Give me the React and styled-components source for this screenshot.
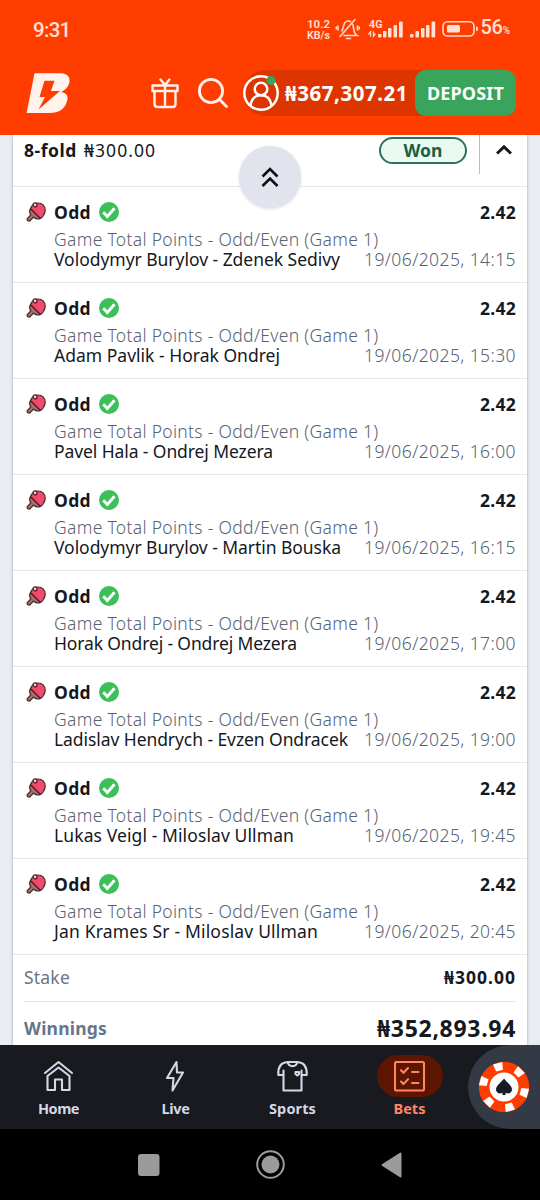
import React from 'react';
import styled, { createGlobalStyle } from 'styled-components';

const bets = [
  { match: 'Volodymyr Burylov - Zdenek Sedivy', date: '19/06/2025, 14:15', w: 286 },
  { match: 'Adam Pavlik - Horak Ondrej', date: '19/06/2025, 15:30', w: 226 },
  { match: 'Pavel Hala - Ondrej Mezera', date: '19/06/2025, 16:00', w: 219 },
  { match: 'Volodymyr Burylov - Martin Bouska', date: '19/06/2025, 16:15', w: 287 },
  { match: 'Horak Ondrej - Ondrej Mezera', date: '19/06/2025, 17:00', w: 243 },
  { match: 'Ladislav Hendrych - Evzen Ondracek', date: '19/06/2025, 19:00', w: 294 },
  { match: 'Lukas Veigl - Miloslav Ullman', date: '19/06/2025, 19:45', w: 240 },
  { match: 'Jan Krames Sr - Miloslav Ullman', date: '19/06/2025, 20:45', w: 264 },
];

// spreads the letters so that a text takes exactly w pixels
function Fit({ w, children }) {
  const ref = React.useRef(null);
  React.useLayoutEffect(() => {
    const el = ref.current;
    el.style.letterSpacing = '0px';
    const gap = (w - el.getBoundingClientRect().width) / children.length;
    el.style.letterSpacing = `${gap.toFixed(3)}px`;
  }, [w, children]);
  return <FitText ref={ref}>{children}</FitText>;
}

function Logo() {
  return (
    <svg width="44" height="40" viewBox="26 73 44 40">
      <path fill="#fff3ec" fillRule="evenodd" d="M34.500 73.300H60c7 0 10.500 3.500 9.400 9-.8 4.200-4 8-8.400 9.700 4.600.6 7.200 3.300 6.400 7.500C65.800 108 60 113 50 113H26.600zM44.500 80.700l-5 16.300h5.500l-6.500 12.500L60 91h-9l3.500-10.300z" />
    </svg>
  );
}

function Gift() {
  return (
    <svg width="28" height="32" viewBox="0 0 28 32" fill="none" stroke="#fff3ec" strokeWidth="2.400" strokeLinejoin="round" strokeLinecap="round">
      <path d="M1.500 8.500h25v5.500h-25zM3.500 14v13c0 2 1 3 3 3h15c2 0 3-1 3-3V14M14 8.500V30M9.500 2.500l4.500 5.500 4.500-5.500" />
    </svg>
  );
}

function Search() {
  return (
    <svg width="30" height="30" viewBox="0 0 30 30" fill="none" stroke="#fff3ec" strokeWidth="2.800" strokeLinecap="round">
      <circle cx="13" cy="13" r="11.600" />
      <path d="M21.500 21.500l7 7" />
    </svg>
  );
}

function User() {
  return (
    <svg width="36" height="36" viewBox="0 0 36 36" fill="none" stroke="#fff" strokeWidth="2.500">
      <circle cx="18" cy="18" r="16.700" />
      <circle cx="18" cy="14" r="6.300" />
      <path d="M7.500 30.500c1-6.500 5-10.200 10.500-10.200s9.500 3.700 10.500 10.200" />
      <circle cx="28" cy="5.500" r="4.500" fill="#39a45c" stroke="none" />
    </svg>
  );
}

function StatusIcons() {
  return (
    <svg width="176" height="26" viewBox="304 16 176 26" fill="none" stroke="#ffd9ca" strokeWidth="1.600" strokeLinecap="round">
      <path d="M343 35.500h13c-3-2-3.200-5-3.500-8-.2-1.500-.5-2.500-1-3.500M341 31c1-2 1.200-4 1.500-5 .8-3.500 2.500-5 5-5l2 .5M345.500 38.500h4M339 36.500l15-17M337 26v4M335.300 27v2M356.500 26v4M358.300 27v2" />
      <g fill="#ffe1d5" stroke="none">
        <rect x="377" y="34" width="3.500" height="3.500" rx="1" />
        <rect x="382" y="31" width="3.500" height="6.500" rx="1" />
        <rect x="387" y="28" width="3.500" height="9.500" rx="1" />
        <rect x="392.500" y="25" width="3.500" height="12.500" rx="1" />
        <rect x="398" y="21.500" width="3.700" height="16" rx="1" />
        <rect x="409" y="34" width="3.500" height="3.500" rx="1" />
        <rect x="414.500" y="31" width="3.500" height="6.500" rx="1" />
        <rect x="420" y="28" width="3.500" height="9.500" rx="1" />
        <rect x="425" y="25" width="3.500" height="12.500" rx="1" />
        <rect x="430.500" y="21.500" width="3.700" height="16" rx="1" />
        <rect x="446" y="25" width="13" height="7.500" rx="1.500" />
        <rect x="475" y="26.500" width="1.800" height="4.500" rx=".8" />
      </g>
      <path strokeWidth="1.400" d="M369.500 36v-4l-1.700 2M372.500 32v4l1.700-2" />
      <rect x="442" y="21.700" width="31" height="14.300" rx="4.500" />
      <g fill="#ffe1d5" stroke="none" fontFamily="Roboto, sans-serif" fontWeight="600" fontSize="10.500">
        <text x="306" y="28" textLength="23" lengthAdjust="spacingAndGlyphs">10.2</text>
        <text x="306" y="39" textLength="23" lengthAdjust="spacingAndGlyphs">KB/s</text>
        <text x="368" y="27.500" textLength="13.500" lengthAdjust="spacingAndGlyphs">4G</text>
      </g>
    </svg>
  );
}

function Paddle() {
  return (
    <svg width="20" height="20" viewBox="0 0 20 20" stroke="#3f2830" strokeWidth="1.200" strokeLinejoin="round">
      <path fill="#b06a62" d="M4.500 6.500l10 10c-2.500 1-5 .3-7-1.300l-3.500 3.600c-1.500 1.200-3.700-.8-2.500-2.500l3.300-3.500c-1.300-2-1.600-4.500-.3-6.300z" />
      <path fill="#f4486c" d="M4.500 6.500C6 2.800 8.500 1 12 1c4.300 0 7.400 3.200 7.200 7-.2 3.500-1.700 6.500-4.700 8.500z" />
      <circle cx="9" cy="2.900" r="2" fill="#f0c4cb" />
    </svg>
  );
}

function Check() {
  return (
    <svg width="20" height="20" viewBox="0 0 20 20">
      <circle cx="10" cy="10" r="10" fill="#3dbf57" />
      <path d="M4.300 10.300l4 4.200 7.200-8.300" fill="none" stroke="#fff" strokeWidth="2.900" />
    </svg>
  );
}

const navIcons = {
  home: (
    <>
      <path d="M1 12.500L14.500 1.500 28 12.500" />
      <path d="M3.500 15.500v14h7.500V19h7v10.500h7.500v-14L14.500 7z" />
    </>
  ),
  live: <path d="M15.500 1.500L6 17.500h6.500L11.500 30 22 12h-6z" />,
  sports: (
    <>
      <path d="M5.500 14.500H.3c-.5-8 2.200-12.500 9.200-13 1.500 5.500 8.500 5.500 10 0 7 .5 9.700 5 9.200 13h-5.200M5.500 10v20h18V10M9.500 1.500h10" />
      <path d="M17.500 11.500h3.500v2l-1.700 1.500-1.800-1.500z" />
    </>
  ),
  bets: (
    <>
      <rect x="0" y="1.500" width="29" height="28.500" rx="1.500" />
      <path d="M6 9.700l2.500 2.600L13 7.500M17 11.500h6.500M6 21l2.500 2.600L13 18.800M17 22.500h6.500" />
    </>
  ),
};

function NavItem({ icon, label, w, active }) {
  return (
    <Tab $active={active}>
      <Pill $active={active}>
        <svg width="33" height="33" viewBox="-2 0 33 32" fill="none" stroke="currentColor" strokeWidth="2.100" strokeLinejoin="round" strokeLinecap="round">
          {navIcons[icon]}
        </svg>
      </Pill>
      <TabLabel><Fit w={w}>{label}</Fit></TabLabel>
    </Tab>
  );
}

function Chip() {
  return (
    <svg width="52" height="52" viewBox="-26 -26 52 52">
      <circle r="25.200" fill="#ff3d00" />
      <g fill="#fff">
        {[-15, 45, 105, 165, 225, 285].map((a) => (
          <path key={a} d="M-4.800 -24.700h9.600l-1.300 7.700h-7z" transform={`rotate(${a})`} />
        ))}
        <circle r="14.500" />
      </g>
      <path fill="#161b24" d="M0-8.500C2-5 8-2 8 2.500 8 6 4 7.500 1.600 5.500V8h-3.200V5.500C-4 7.500-8 6-8 2.500-8-2-2-5 0-8.500z" />
    </svg>
  );
}

export default function App() {
  return (
    <Screen>
      <Global />
      <StatusBar>
        <Clock><Fit w={37.500}>9:31</Fit></Clock>
        <StatusRight>
          <StatusIcons />
          <Battery><Fit w={22}>56</Fit><small>%</small></Battery>
        </StatusRight>
      </StatusBar>
      <AppBar>
        <LogoLink><Logo /></LogoLink>
        <IconButton><Gift /></IconButton>
        <IconButton $left={19}><Search /></IconButton>
        <Wallet>
          <User />
          <Balance><Fit w={123}>₦367,307.21</Fit></Balance>
          <Deposit><Fit w={77}>DEPOSIT</Fit></Deposit>
        </Wallet>
      </AppBar>
      <Main>
        <Card>
          <CardHead>
            <Fold><b><Fit w={53}>8-fold</Fit></b><Fit w={72}>₦300.00</Fit></Fold>
            <Won><Fit w={39}>Won</Fit></Won>
            <Collapse>
              <svg width="16" height="10" viewBox="0 0 16 10" fill="none" stroke="#161a20" strokeWidth="3">
                <path d="M1 8.500l7-6.700 7 6.700" />
              </svg>
            </Collapse>
            <ScrollTop>
              <svg width="18" height="22" viewBox="0 0 18 22" fill="none" stroke="#0c0e12" strokeWidth="2.600">
                <path d="M1.500 10.500L9 3l7.500 7.500M1.500 20L9 12.500l7.500 7.500" />
              </svg>
            </ScrollTop>
          </CardHead>
          {bets.map((bet) => (
            <Bet key={bet.date}>
              <Pick>
                <Paddle />
                <Strong><Fit w={37}>Odd</Fit></Strong>
                <Check />
                <Odds><Fit w={36}>2.42</Fit></Odds>
              </Pick>
              <Market><Fit w={324.500}>Game Total Points - Odd/Even (Game 1)</Fit></Market>
              <Match>
                <Fit w={bet.w}>{bet.match}</Fit>
                <When><Fit w={152}>{bet.date}</Fit></When>
              </Match>
            </Bet>
          ))}
          <Stake>
            <Fit w={46}>Stake</Fit>
            <Strong><Fit w={72}>₦300.00</Fit></Strong>
          </Stake>
          <Winnings>
            <Fit w={83}>Winnings</Fit>
            <Total><Fit w={139}>₦352,893.94</Fit></Total>
          </Winnings>
        </Card>
      </Main>
      <TabBar>
        <NavItem icon="home" label="Home" w={41} />
        <NavItem icon="live" label="Live" w={28} />
        <NavItem icon="sports" label="Sports" w={47} />
        <NavItem icon="bets" label="Bets" w={32} active />
        <Casino><Chip /></Casino>
      </TabBar>
      <SystemBar>
        <svg width="22" height="22"><rect width="21.500" height="22" rx="3" fill="#9b9b9b" /></svg>
        <svg width="30" height="30" viewBox="0 0 30 30">
          <circle cx="14.500" cy="14.500" r="13.300" fill="none" stroke="#9b9b9b" strokeWidth="2" />
          <circle cx="14.500" cy="14.500" r="9" fill="#9b9b9b" />
        </svg>
        <svg width="21" height="26" viewBox="0 0 21 26">
          <path d="M19.500 1.500v23L1.500 13z" fill="#9b9b9b" stroke="#9b9b9b" strokeWidth="2" strokeLinejoin="round" />
        </svg>
      </SystemBar>
    </Screen>
  );
}

const Global = createGlobalStyle`
  * { box-sizing: border-box; }
  body { margin: 0; background: #000; }
  svg { display: block; flex: none; }
`;

const FitText = styled.span`
  display: inline-block;
  white-space: nowrap;
`;

const Screen = styled.div`
  width: 540px;
  height: 1200px;
  display: flex;
  flex-direction: column;
  overflow: hidden;
  font-family: "Noto Sans", "Open Sans", sans-serif;
  font-size: 17.500px;
  color: #15181e;
`;

const StatusBar = styled.div`
  height: 58px;
  display: flex;
  justify-content: space-between;
  padding: 0 30px 0 33px;
  background: #ff3d00;
  color: #ffe1d5;
  font-family: Roboto, sans-serif;
`;

const Clock = styled.div`
  font-size: 20.500px;
  font-weight: 500;
  line-height: 60px;
`;

const StatusRight = styled.div`
  display: flex;
  align-items: center;
`;

const Battery = styled.div`
  font-size: 20px;
  font-weight: 500;
  line-height: 62px;
  small { font-size: 10px; }
`;

const AppBar = styled.header`
  height: 77px;
  flex: none;
  display: flex;
  align-items: center;
  padding: 0 24px 7px 26px;
  background: #ff3d00;
`;

const LogoLink = styled.div`
  flex: 1;
`;

const IconButton = styled.div`
  margin-left: ${(p) => p.$left || 0}px;
`;

const Wallet = styled.div`
  display: flex;
  align-items: center;
  height: 46px;
  margin-left: 15px;
  border-radius: 23px 12px 12px 23px;
  background: #dc3500;
`;

const Balance = styled.div`
  width: 136px;
  padding-left: 6px;
  color: #fff;
  font-size: 20.500px;
  font-weight: 700;
`;

const Deposit = styled.div`
  width: 101px;
  height: 46px;
  border-radius: 11px;
  background: #39a45c;
  color: #fff;
  font-size: 18px;
  font-weight: 700;
  line-height: 46px;
  text-align: center;
`;

const Main = styled.main`
  height: 910px;
  flex: none;
  padding: 0 13px;
  overflow: hidden;
  background: #e9edf1;
`;

const Card = styled.section`
  height: 930px;
  background: #fff;
  box-shadow: 0 0 3px rgba(70, 85, 110, 0.45);
`;

const CardHead = styled.div`
  position: relative;
  height: 52px;
  display: flex;
  align-items: flex-start;
  padding: 0 11px;
  border-bottom: 1px solid #e4e7eb;
`;

const Fold = styled.div`
  flex: 1;
  display: flex;
  gap: 7px;
  line-height: 30px;
`;

const Won = styled.div`
  width: 88px;
  height: 27px;
  margin-top: 2px;
  border: 2px solid #2c7453;
  border-radius: 14px;
  background: #eafaf1;
  color: #1c6042;
  font-weight: 700;
  line-height: 23px;
  text-align: center;
`;

const Collapse = styled.div`
  width: 37px;
  height: 39px;
  margin-left: 12px;
  padding: 10px 0 0 16px;
  border-left: 1px solid #b4bcc8;
`;

const ScrollTop = styled.button`
  position: absolute;
  top: 11px;
  left: 226px;
  width: 62px;
  height: 62px;
  display: flex;
  align-items: center;
  justify-content: center;
  border: 0;
  border-radius: 50%;
  background: #e1e4ec;
  box-shadow: 0 1px 3px rgba(40, 50, 70, 0.15);
`;

const Bet = styled.article`
  height: 96px;
  padding: 13px 11px 0 13px;
  border-bottom: 1px solid #e4e7eb;
`;

const Pick = styled.div`
  display: flex;
  align-items: center;
  gap: 8px;
  height: 23px;
`;

const Strong = styled.strong`
  font-weight: 700;
`;

const Odds = styled(Strong)`
  margin-left: auto;
`;

const Market = styled.div`
  margin: 6px 0 0 28px;
  height: 20px;
  line-height: 20px;
  color: #566275;
  font-weight: 350;
`;

const Match = styled.div`
  display: flex;
  justify-content: space-between;
  padding-left: 28px;
  line-height: 21px;
`;

const When = styled.span`
  color: #566275;
  font-weight: 350;
`;

const Stake = styled.div`
  display: flex;
  justify-content: space-between;
  margin: 0 11px;
  height: 47px;
  line-height: 45px;
  border-bottom: 1px solid #e4e7eb;
  color: #6b7686;
  ${Strong} { color: #15181e; }
`;

const Winnings = styled.div`
  display: flex;
  justify-content: space-between;
  padding: 0 11px;
  line-height: 53px;
  color: #66768a;
  font-weight: 700;
`;

const Total = styled.span`
  color: #15181e;
  font-size: 23px;
`;

const TabBar = styled.nav`
  height: 84px;
  flex: none;
  display: flex;
  background: #191a20;
`;

const Tab = styled.div`
  width: 117px;
  display: flex;
  flex-direction: column;
  align-items: center;
  padding-top: 10px;
  color: ${(p) => (p.$active ? '#ff8664' : '#d3d7e6')};
`;

const Pill = styled.div`
  width: 66px;
  height: 42px;
  display: flex;
  align-items: center;
  justify-content: center;
  border-radius: 21px;
  background: ${(p) => (p.$active ? '#5c1500' : 'transparent')};
`;

const TabLabel = styled.div`
  font-size: 14.500px;
  font-weight: 700;
  line-height: 23px;
`;

const Casino = styled.div`
  flex: 1;
  padding: 16px 0 0 10px;
  border-radius: 42px 0 0 42px;
  background: #333a46;
  overflow: hidden;
`;

const SystemBar = styled.footer`
  height: 71px;
  flex: none;
  display: flex;
  align-items: center;
  justify-content: space-between;
  padding: 0 138px;
  background: #000;
`;
